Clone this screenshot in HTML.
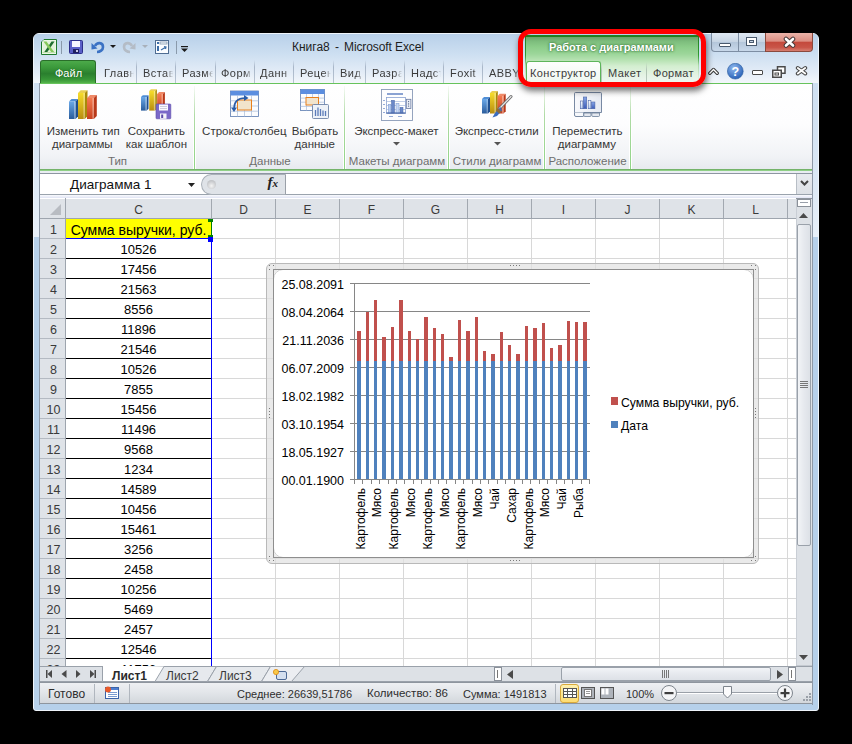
<!DOCTYPE html>
<html><head><meta charset="utf-8">
<style>
*{margin:0;padding:0;box-sizing:border-box}
html,body{width:852px;height:744px;background:#000;overflow:hidden;font-family:"Liberation Sans",sans-serif;font-size:12px;color:#000;position:relative}
div,span,svg{position:absolute}
.t{white-space:nowrap;line-height:1}
.tab{color:#3b3b3b;font-size:11px}
.rb{color:#363636;font-size:11.5px;text-align:center;line-height:13px}
.gl{color:#6e6e6e;font-size:11.5px;text-align:center;line-height:13px}
.num{font-size:12px;color:#000;text-align:center;width:145px;line-height:1}
.rh{font-size:12.5px;color:#3a3a3a;text-align:center;width:27px;line-height:1}
.ch{font-size:12px;color:#3a3a3a;text-align:center;width:64px;line-height:1}
</style></head><body>

<div style="left:33px;top:33px;width:786px;height:678px;border-radius:6px 6px 3px 3px;background:#b6d0ea;border:1px solid #eef4fa"></div>
<div style="left:34px;top:34px;width:784px;height:49px;border-radius:5px 5px 0 0;background:linear-gradient(#b8d0e9,#cddff1 20px,#e3ecf7 38px,#f3f7fb 49px)"></div>
<svg style="left:41px;top:39px" width="16" height="16" viewBox="0 0 16 16">
<path d="M3 0.5 H15.5 V15.5 H0.5 V3 Z" fill="#f4faf0" stroke="#1f7a2e"/>
<rect x="1.5" y="1.5" width="13" height="13" fill="#e2f2da"/>
<path d="M10.5 2.5 L13.5 2.5 L6 13.5 L3 13.5 Z" fill="#1f6e30"/>
<path d="M2.5 2.5 L5.5 2.5 L13.5 13.5 L10.5 13.5 Z" fill="#86c85a"/>
<path d="M1.5 13.5 H14.5" stroke="#bfe0b0" stroke-width="1"/>
</svg>
<div style="left:61px;top:41px;width:1px;height:13px;background:#8a9aab"></div>
<svg style="left:69px;top:40px" width="14" height="14" viewBox="0 0 14 14">
<rect x="0.5" y="0.5" width="13" height="13" rx="1" fill="#5a5fc8" stroke="#2c2f8a"/>
<rect x="3" y="1" width="8" height="6" fill="#f4f4ff"/>
<rect x="4" y="9" width="6" height="4" fill="#1f2060"/>
<rect x="7" y="10" width="2" height="2" fill="#c8c8e8"/>
</svg>
<svg style="left:91px;top:40px" width="14" height="14" viewBox="0 0 14 14">
<path d="M4 6 C6 2,12 2,12 7 C12 10,9 12,6 12" fill="none" stroke="#3b72c4" stroke-width="2.6"/>
<path d="M0.5 3 L6.5 8.5 L0.5 9.5 Z" fill="#3b72c4"/>
</svg>
<svg style="left:110px;top:45px" width="6" height="4" viewBox="0 0 6 4"><path d="M0 0H6L3 3Z" fill="#1a1a1a"/></svg>
<svg style="left:122px;top:40px" width="14" height="14" viewBox="0 0 14 14">
<path d="M10 6 C8 2,2 2,2 7 C2 10,5 12,8 12" fill="none" stroke="#b4bcc6" stroke-width="2.6"/>
<path d="M13.5 3 L7.5 8.5 L13.5 9.5 Z" fill="#b4bcc6"/>
</svg>
<svg style="left:142px;top:45px" width="6" height="4" viewBox="0 0 6 4"><path d="M0 0H6L3 3Z" fill="#a8b0ba"/></svg>
<svg style="left:155px;top:40px" width="14" height="14" viewBox="0 0 14 14">
<rect x="0.5" y="0.5" width="13" height="13" fill="#fbfdff" stroke="#4f6d92"/>
<rect x="2" y="2" width="2" height="2" fill="#3d6ea8"/><rect x="5" y="2" width="7" height="2" fill="none" stroke="#7d93ad" stroke-width="0.8"/>
<rect x="2" y="6" width="2" height="5" fill="#3d6ea8"/>
<path d="M6 10 L11 7 M9 6.5 L11 7 L10.5 9" stroke="#3d6ea8" stroke-width="1.2" fill="none"/>
</svg>
<div style="left:176px;top:41px;width:1px;height:13px;background:#8a9aab"></div>
<svg style="left:181px;top:46px" width="7" height="6" viewBox="0 0 7 6"><rect x="0" y="0" width="7" height="1.2" fill="#1a1a1a"/><path d="M0 2.5H7L3.5 6Z" fill="#1a1a1a"/></svg>
<div class="t" style="left:292px;top:41px;color:#1e1e1e;font-size:12px">Книга8</div>
<div class="t" style="left:335px;top:41px;color:#1e1e1e;font-size:12px">-</div>
<div class="t" style="left:344px;top:41px;color:#1e1e1e;font-size:12px;letter-spacing:-0.1px">Microsoft Excel</div>
<div style="left:711px;top:33px;width:28px;height:19px;border:1px solid #7d8ea3;border-top:none;border-radius:0 0 0 4px;background:linear-gradient(#dfe8f2,#c6d4e3 50%,#b4c6da 51%,#c8d8ea)"></div>
<div style="left:738px;top:33px;width:28px;height:19px;border:1px solid #7d8ea3;border-top:none;background:linear-gradient(#dfe8f2,#c6d4e3 50%,#b4c6da 51%,#c8d8ea)"></div>
<div style="left:765px;top:33px;width:48px;height:19px;border:1px solid #8a4a3e;border-top:none;border-radius:0 0 4px 0;background:linear-gradient(#ebb3a9,#dc8f83 45%,#c4493c 52%,#c95548 80%,#d67e70)"></div>
<div style="left:719px;top:43px;width:12px;height:4px;background:#fff;border:1px solid #4a5a6e;border-radius:1px"></div>
<div style="left:746px;top:37px;width:11px;height:9px;background:transparent;border:1px solid #4a5a6e;box-shadow:inset 0 0 0 2px #fff, inset 0 0 0 3px #4a5a6e"></div>
<svg style="left:783px;top:36px" width="13" height="12" viewBox="0 0 13 12"><path d="M3 3 L10 9.5 M10 3 L3 9.5" stroke="#4a3a3a" stroke-width="4.6" stroke-linecap="round"/><path d="M3 3 L10 9.5 M10 3 L3 9.5" stroke="#fff" stroke-width="2.6" stroke-linecap="round"/></svg>
<div style="left:40px;top:60px;width:56px;height:24px;border-radius:3px 3px 0 0;background:linear-gradient(#4caa4a,#3a983a 30%,#2a7f2e 55%,#379637 80%,#5cbc50);border:1px solid #2a6e2a;border-bottom:none"></div>
<div class="t" style="left:55px;top:67.5px;color:#fff;font-size:11px;text-shadow:0 0 2px rgba(20,80,20,0.6)">Файл</div>
<div style="left:136px;top:60px;width:1px;height:23px;background:linear-gradient(rgba(160,175,195,0),#a8b6c8 30%,#b8c4d2)"></div>
<div style="left:175px;top:60px;width:1px;height:23px;background:linear-gradient(rgba(160,175,195,0),#a8b6c8 30%,#b8c4d2)"></div>
<div style="left:215px;top:60px;width:1px;height:23px;background:linear-gradient(rgba(160,175,195,0),#a8b6c8 30%,#b8c4d2)"></div>
<div style="left:254px;top:60px;width:1px;height:23px;background:linear-gradient(rgba(160,175,195,0),#a8b6c8 30%,#b8c4d2)"></div>
<div style="left:293px;top:60px;width:1px;height:23px;background:linear-gradient(rgba(160,175,195,0),#a8b6c8 30%,#b8c4d2)"></div>
<div style="left:333px;top:60px;width:1px;height:23px;background:linear-gradient(rgba(160,175,195,0),#a8b6c8 30%,#b8c4d2)"></div>
<div style="left:365px;top:60px;width:1px;height:23px;background:linear-gradient(rgba(160,175,195,0),#a8b6c8 30%,#b8c4d2)"></div>
<div style="left:404px;top:60px;width:1px;height:23px;background:linear-gradient(rgba(160,175,195,0),#a8b6c8 30%,#b8c4d2)"></div>
<div style="left:443px;top:60px;width:1px;height:23px;background:linear-gradient(rgba(160,175,195,0),#a8b6c8 30%,#b8c4d2)"></div>
<div style="left:482px;top:60px;width:1px;height:23px;background:linear-gradient(rgba(160,175,195,0),#a8b6c8 30%,#b8c4d2)"></div>
<div class="t tab" style="left:104px;top:67.5px;width:30px;overflow:hidden;letter-spacing:0.45px;-webkit-mask-image:linear-gradient(90deg,#000 23px,rgba(0,0,0,0.05) 30px)">Главн</div>
<div class="t tab" style="left:143px;top:67.5px;width:30px;overflow:hidden;letter-spacing:0.45px;-webkit-mask-image:linear-gradient(90deg,#000 23px,rgba(0,0,0,0.05) 30px)">Встав</div>
<div class="t tab" style="left:182px;top:67.5px;width:31px;overflow:hidden;letter-spacing:0.45px;-webkit-mask-image:linear-gradient(90deg,#000 24px,rgba(0,0,0,0.05) 31px)">Разме</div>
<div class="t tab" style="left:221px;top:67.5px;width:31px;overflow:hidden;letter-spacing:0.45px;-webkit-mask-image:linear-gradient(90deg,#000 24px,rgba(0,0,0,0.05) 31px)">Форм</div>
<div class="t tab" style="left:260px;top:67.5px;width:31px;overflow:hidden;letter-spacing:0.45px;-webkit-mask-image:linear-gradient(90deg,#000 24px,rgba(0,0,0,0.05) 31px)">Данн</div>
<div class="t tab" style="left:300px;top:67.5px;width:31px;overflow:hidden;letter-spacing:0.45px;-webkit-mask-image:linear-gradient(90deg,#000 24px,rgba(0,0,0,0.05) 31px)">Рецен</div>
<div class="t tab" style="left:340px;top:67.5px;width:23px;overflow:hidden;letter-spacing:0.45px;-webkit-mask-image:linear-gradient(90deg,#000 16px,rgba(0,0,0,0.05) 23px)">Вид</div>
<div class="t tab" style="left:372px;top:67.5px;width:30px;overflow:hidden;letter-spacing:0.45px;-webkit-mask-image:linear-gradient(90deg,#000 23px,rgba(0,0,0,0.05) 30px)">Разра</div>
<div class="t tab" style="left:411px;top:67.5px;width:30px;overflow:hidden;letter-spacing:0.45px;-webkit-mask-image:linear-gradient(90deg,#000 23px,rgba(0,0,0,0.05) 30px)">Надст</div>
<div class="t tab" style="left:450px;top:67.5px;width:30px;overflow:hidden;letter-spacing:0.45px;-webkit-mask-image:linear-gradient(90deg,#000 23px,rgba(0,0,0,0.05) 30px)">Foxit</div>
<div class="t tab" style="left:489px;top:67.5px;width:32px;overflow:hidden;letter-spacing:0.45px;-webkit-mask-image:linear-gradient(90deg,#000 25px,rgba(0,0,0,0.05) 32px)">ABBYY</div>
<div style="left:525px;top:35px;width:174px;height:48px;background:linear-gradient(#5f965f,#7cbc7c 6px,#8ccd8a 12px,#9cd69a 19px,#b6e2b2 25px,#d3eed0 31px,#e4f3e4 40px,#eef6f2 48px)"></div>
<div style="left:525px;top:35px;width:174px;height:2px;background:#1f7f1f"></div>
<div style="left:525px;top:35px;width:1px;height:48px;background:linear-gradient(#1f7f1f,#2f9a2f 20px,rgba(80,170,80,0.3) 30px,rgba(80,170,80,0))"></div>
<div style="left:698px;top:35px;width:1px;height:48px;background:linear-gradient(#1f7f1f,#2f9a2f 20px,rgba(80,170,80,0.3) 30px,rgba(80,170,80,0))"></div>
<div class="t" style="left:549px;top:42px;color:#fff;font-weight:bold;font-size:11px;text-shadow:0 0 3px #3f7f3f,0 0 2px #3f7f3f">Работа с диаграммами</div>
<div style="left:526px;top:61px;width:75px;height:23px;border:1px solid #5db55a;border-bottom:none;border-radius:3px 3px 0 0;background:linear-gradient(#fdfefd,#eef7ee)"></div>
<div class="t" style="left:530px;top:67.5px;color:#3b3b3b;font-size:11px;letter-spacing:0.35px">Конструктор</div>
<div style="left:601px;top:62px;width:1px;height:21px;background:linear-gradient(rgba(170,200,170,0),#b0c4b4 40%,#b8c8bc)"></div>
<div style="left:646px;top:62px;width:1px;height:21px;background:linear-gradient(rgba(170,200,170,0),#b0c4b4 40%,#b8c8bc)"></div>
<div class="t" style="left:608px;top:67.5px;color:#3b3b3b;font-size:11px;letter-spacing:0.45px">Макет</div>
<div class="t" style="left:653px;top:67.5px;color:#3b3b3b;font-size:11px;letter-spacing:0.3px">Формат</div>
<svg style="left:708px;top:67px" width="11" height="8" viewBox="0 0 11 8"><path d="M1.8 6.2 L5.5 2.5 L9.2 6.2" fill="none" stroke="#3a3a3a" stroke-width="3.4" stroke-linejoin="round" stroke-linecap="round"/><path d="M1.8 6.2 L5.5 2.5 L9.2 6.2" fill="none" stroke="#fff" stroke-width="1.3" stroke-linecap="round"/></svg>
<svg style="left:727px;top:63px" width="17" height="17" viewBox="0 0 17 17"><defs><radialGradient id="hg" cx="40%" cy="30%" r="70%"><stop offset="0" stop-color="#8fb8ee"/><stop offset="1" stop-color="#2a63b8"/></radialGradient></defs><circle cx="8.3" cy="8.2" r="7.9" fill="url(#hg)" stroke="#2f5f9f" stroke-width="0.6"/><text x="8.3" y="13.2" font-family="Liberation Sans" font-weight="bold" font-size="12.5" fill="#fff" text-anchor="middle">?</text></svg>
<div style="left:752px;top:70px;width:11px;height:5px;background:#fff;border:1.5px solid #4a4a4a;border-radius:1px"></div>
<svg style="left:772px;top:66px" width="14" height="12" viewBox="0 0 14 12"><rect x="5.5" y="0.75" width="7.5" height="6.5" fill="#fff" stroke="#4a4a4a" stroke-width="1.5"/><rect x="0.75" y="4.25" width="8.5" height="7" fill="#fff" stroke="#4a4a4a" stroke-width="1.5"/><rect x="3" y="7" width="3.5" height="2" fill="#fff" stroke="#4a4a4a" stroke-width="1"/></svg>
<svg style="left:795px;top:65px" width="13" height="11" viewBox="0 0 13 11"><path d="M2.8 3 L10.2 8.5 M10.2 3 L2.8 8.5" stroke="#4a4a4a" stroke-width="4" stroke-linecap="round"/><path d="M2.8 3 L10.2 8.5 M10.2 3 L2.8 8.5" stroke="#fff" stroke-width="1.8" stroke-linecap="round"/></svg>
<div style="left:40px;top:83px;width:772px;height:88px;background:linear-gradient(#ffffff,#fdfdfe 40px,#f1f3f6 72px,#e6e9ee 86px);border-top:1px solid #67c35c"></div>
<div style="left:40px;top:169px;width:772px;height:1px;background:#74b36a"></div>
<div style="left:40px;top:170px;width:772px;height:1px;background:#8fcf86"></div>
<div style="left:40px;top:171px;width:772px;height:1px;background:#c9e5c4"></div>
<div style="left:193px;top:86px;width:3px;height:83px;background:linear-gradient(rgba(255,255,255,0),#fff 35%,#fff)"></div>
<div style="left:194px;top:86px;width:1px;height:83px;background:linear-gradient(rgba(180,220,170,0.1),#b0dba6 35%,#8fd486)"></div>
<div style="left:343px;top:86px;width:3px;height:83px;background:linear-gradient(rgba(255,255,255,0),#fff 35%,#fff)"></div>
<div style="left:344px;top:86px;width:1px;height:83px;background:linear-gradient(rgba(180,220,170,0.1),#b0dba6 35%,#8fd486)"></div>
<div style="left:447px;top:86px;width:3px;height:83px;background:linear-gradient(rgba(255,255,255,0),#fff 35%,#fff)"></div>
<div style="left:448px;top:86px;width:1px;height:83px;background:linear-gradient(rgba(180,220,170,0.1),#b0dba6 35%,#8fd486)"></div>
<div style="left:543px;top:86px;width:3px;height:83px;background:linear-gradient(rgba(255,255,255,0),#fff 35%,#fff)"></div>
<div style="left:544px;top:86px;width:1px;height:83px;background:linear-gradient(rgba(180,220,170,0.1),#b0dba6 35%,#8fd486)"></div>
<div style="left:629px;top:86px;width:3px;height:83px;background:linear-gradient(rgba(255,255,255,0),#fff 35%,#fff)"></div>
<div style="left:630px;top:86px;width:1px;height:83px;background:linear-gradient(rgba(180,220,170,0.1),#b0dba6 35%,#8fd486)"></div>
<svg style="left:60px;top:85px" width="45" height="36" viewBox="60 85 45 36"><defs>
<linearGradient id="gb" x1="0" y1="0" x2="0" y2="1"><stop offset="0" stop-color="#6aa8e8"/><stop offset="1" stop-color="#2a5c9c"/></linearGradient>
<linearGradient id="gy" x1="0" y1="0" x2="0" y2="1"><stop offset="0" stop-color="#f6dc2a"/><stop offset="1" stop-color="#b88c10"/></linearGradient>
<linearGradient id="gr" x1="0" y1="0" x2="0" y2="1"><stop offset="0" stop-color="#f47a50"/><stop offset="1" stop-color="#c8401c"/></linearGradient>
</defs>
<path d="M69 101.5 L71.5 99.0 L78.0 99.0 L75.5 101.5Z" fill="#4f8ed6"/><path d="M75.5 101.5 L78.0 99.0 L78.0 116.5 L75.5 119.0Z" fill="#1f4f90"/><rect x="69" y="101.5" width="6.5" height="17.5" fill="url(#gb)"/><rect x="74.2" y="101.5" width="1" height="17.5" fill="#fff" fill-opacity="0.45"/>
<path d="M78 93 L80.7 90.3 L87.5 90.3 L84.8 93Z" fill="#ead050"/><path d="M84.8 93 L87.5 90.3 L87.5 116.3 L84.8 119Z" fill="#a88a08"/><rect x="78" y="93" width="6.8" height="26" fill="url(#gy)"/><rect x="83.5" y="93" width="1" height="26" fill="#fff" fill-opacity="0.45"/>
<path d="M87 98 L90 95 L96.8 95 L93.8 98Z" fill="#f08a68"/><path d="M93.8 98 L96.8 95 L96.8 116 L93.8 119Z" fill="#b83818"/><rect x="87" y="98" width="6.8" height="21" fill="url(#gr)"/><rect x="92.5" y="98" width="1" height="21" fill="#fff" fill-opacity="0.45"/>
</svg>
<svg style="left:136px;top:85px" width="40" height="37" viewBox="136 85 40 37">
<path d="M141 97 L142.8 95.2 L148.5 95.2 L146.7 97Z" fill="#4f8ed6"/><path d="M146.7 97 L148.5 95.2 L148.5 108.8 L146.7 110.6Z" fill="#1f4f90"/><rect x="141" y="97" width="5.7" height="13.6" fill="url(#gb)"/><rect x="145.39999999999998" y="97" width="1" height="13.6" fill="#fff" fill-opacity="0.45"/>
<path d="M149.2 91 L150.89999999999998 89.3 L156.89999999999998 89.3 L155.2 91Z" fill="#ead050"/><path d="M155.2 91 L156.89999999999998 89.3 L156.89999999999998 108.89999999999999 L155.2 110.6Z" fill="#a88a08"/><rect x="149.2" y="91" width="6" height="19.6" fill="url(#gy)"/><rect x="153.89999999999998" y="91" width="1" height="19.6" fill="#fff" fill-opacity="0.45"/>
<path d="M157.1 94 L159.1 92 L164.9 92 L162.9 94Z" fill="#f08a68"/><path d="M162.9 94 L164.9 92 L164.9 108.6 L162.9 110.6Z" fill="#b83818"/><rect x="157.1" y="94" width="5.8" height="16.6" fill="url(#gr)"/><rect x="161.6" y="94" width="1" height="16.6" fill="#fff" fill-opacity="0.45"/>
<rect x="156" y="104" width="14.8" height="14.8" rx="0.8" fill="#7a68c8" stroke="#5a4aa8" stroke-width="0.6"/>
<rect x="159" y="104.5" width="9" height="6" fill="#fbfbff"/>
<path d="M160 106.5H167M160 108.5H167" stroke="#b0b0c8" stroke-width="0.6"/>
<rect x="160" y="113.5" width="6.5" height="5.3" fill="#f4f4f8"/>
<rect x="161.2" y="114.5" width="2" height="3.5" fill="#5a4aa8"/>
</svg>
<svg style="left:225px;top:85px" width="110" height="37" viewBox="225 85 110 37">
<rect x="230.5" y="91" width="28" height="25.5" fill="#fbfcfe" stroke="#5a7ab0" stroke-width="0.8"/><rect x="230.5" y="91" width="28" height="4.5" fill="#5b8ee0"/><line x1="237.5" y1="95.5" x2="237.5" y2="116.5" stroke="#a8bcd8" stroke-width="0.7"/><line x1="244.5" y1="95.5" x2="244.5" y2="116.5" stroke="#a8bcd8" stroke-width="0.7"/><line x1="251.5" y1="95.5" x2="251.5" y2="116.5" stroke="#a8bcd8" stroke-width="0.7"/><line x1="230.5" y1="100.8" x2="258.5" y2="100.8" stroke="#a8bcd8" stroke-width="0.7"/><line x1="230.5" y1="106.0" x2="258.5" y2="106.0" stroke="#a8bcd8" stroke-width="0.7"/><line x1="230.5" y1="111.2" x2="258.5" y2="111.2" stroke="#a8bcd8" stroke-width="0.7"/>
<rect x="237.5" y="100" width="14" height="10" fill="#f2e4cc" stroke="#e8801c" stroke-width="1"/>
<path d="M234 109 C234 101,238 98,245 98" fill="none" stroke="#2a5ca8" stroke-width="1.6"/>
<path d="M244 95 L248.5 98 L244 101Z" fill="#2a5ca8"/>
<path d="M231 107.5 L234 112 L237 107.5Z" fill="#2a5ca8"/>
<rect x="300.5" y="89.5" width="24" height="21" fill="#fbfcfe" stroke="#5a7ab0" stroke-width="0.8"/><rect x="300.5" y="89.5" width="24" height="4.5" fill="#5b8ee0"/><line x1="306.5" y1="94.0" x2="306.5" y2="110.5" stroke="#a8bcd8" stroke-width="0.7"/><line x1="312.5" y1="94.0" x2="312.5" y2="110.5" stroke="#a8bcd8" stroke-width="0.7"/><line x1="318.5" y1="94.0" x2="318.5" y2="110.5" stroke="#a8bcd8" stroke-width="0.7"/><line x1="300.5" y1="98.1" x2="324.5" y2="98.1" stroke="#a8bcd8" stroke-width="0.7"/><line x1="300.5" y1="102.2" x2="324.5" y2="102.2" stroke="#a8bcd8" stroke-width="0.7"/><line x1="300.5" y1="106.4" x2="324.5" y2="106.4" stroke="#a8bcd8" stroke-width="0.7"/>
<rect x="306" y="97.5" width="12.5" height="7.5" fill="#f2e4cc" stroke="#e8801c" stroke-width="1"/>
<rect x="312.5" y="104.5" width="16" height="14" rx="1" fill="#eef2f8" stroke="#6f85a8" stroke-width="0.9"/>
<path d="M315.5 116V110M318 116V107.5M320.5 116V109M323 116V110.5M325.5 116V111" stroke="#5a7ab8" stroke-width="1.3"/>
</svg>
<svg style="left:375px;top:85px" width="45" height="40" viewBox="375 85 45 40">
<rect x="381.5" y="89.5" width="31" height="31" fill="#fdfdfe" stroke="#8a9bb8" stroke-width="0.9"/>
<rect x="387" y="93" width="16" height="2" fill="#8aa2d2"/>
<rect x="386.5" y="97.5" width="19" height="15.5" fill="#fff" stroke="#8aa2d2" stroke-width="0.8"/>
<path d="M386.5 101.5H405.5M386.5 105.5H405.5M386.5 109.5H405.5" stroke="#9ab0d8" stroke-width="0.6"/>
<rect x="388.3" y="104.3" width="2.6" height="8.7" fill="#b8ccf0" stroke="#7a98d0" stroke-width="0.5"/>
<rect x="391.5" y="100.3" width="3" height="12.7" fill="#6a88c8" stroke="#4a68a8" stroke-width="0.5"/>
<rect x="396" y="103.3" width="3" height="9.7" fill="#c8d8f4" stroke="#7a98d0" stroke-width="0.5"/>
<rect x="400" y="107.3" width="3" height="5.7" fill="#6a88c8" stroke="#4a68a8" stroke-width="0.5"/>
<rect x="386.3" y="112.5" width="19.4" height="1.2" fill="#4a68a8"/>
<rect x="406.3" y="99.3" width="4.6" height="9.2" fill="#e8ecf4" stroke="#6a7aa0" stroke-width="0.8"/>
<path d="M408.6 101.5v.1M408.6 103.8v.1M408.6 106v.1" stroke="#4a5a80" stroke-width="1.2" stroke-linecap="round"/>
<path d="M383 100.5H385M383 104.5H385M383 108.5H385M383 112.5H385M389 116.5H393M398 116.5H402" stroke="#8aa2d2" stroke-width="0.9"/>
</svg>
<svg style="left:475px;top:85px" width="45" height="37" viewBox="475 85 45 37">
<path d="M482 99 L484 97 L490 97 L488 99Z" fill="#4f8ed6"/><path d="M488 99 L490 97 L490 111.5 L488 113.5Z" fill="#1f4f90"/><rect x="482" y="99" width="6" height="14.5" fill="url(#gb)"/><rect x="486.7" y="99" width="1" height="14.5" fill="#fff" fill-opacity="0.45"/>
<path d="M490 93 L492 91 L497.8 91 L495.8 93Z" fill="#ead050"/><path d="M495.8 93 L497.8 91 L497.8 111.5 L495.8 113.5Z" fill="#a88a08"/><rect x="490" y="93" width="5.8" height="20.5" fill="url(#gy)"/><rect x="494.5" y="93" width="1" height="20.5" fill="#fff" fill-opacity="0.45"/>
<path d="M497.5 96 L499.7 93.8 L505.7 93.8 L503.5 96Z" fill="#f08a68"/><path d="M503.5 96 L505.7 93.8 L505.7 111.3 L503.5 113.5Z" fill="#b83818"/><rect x="497.5" y="96" width="6" height="17.5" fill="url(#gr)"/><rect x="502.2" y="96" width="1" height="17.5" fill="#fff" fill-opacity="0.45"/>
<path d="M511 96.5 L499 109" stroke="#6c6c6c" stroke-width="3" stroke-linecap="round"/>
<path d="M511 96.5 L499 109" stroke="#e8e8e8" stroke-width="1.2" stroke-linecap="round"/>
<path d="M500.5 107 L502 110.5 L497 116 L492.5 117.5 L495 113 Z" fill="#3a6cc0"/>
<path d="M498 108 L501.5 111.5 L499 113.5 L496 110.5Z" fill="#8a6a40"/>
</svg>
<svg style="left:570px;top:88px" width="36" height="32" viewBox="570 88 36 32">
<defs><linearGradient id="mvb" x1="0" y1="0" x2="1" y2="0"><stop offset="0" stop-color="#f8f9fc"/><stop offset="1" stop-color="#e6eaf2"/></linearGradient>
<linearGradient id="bl1" x1="0" y1="0" x2="0" y2="1"><stop offset="0" stop-color="#ffffff"/><stop offset="1" stop-color="#b8cdf0"/></linearGradient>
<linearGradient id="bd1" x1="0" y1="0" x2="0" y2="1"><stop offset="0" stop-color="#8aa8e8"/><stop offset="1" stop-color="#3a5ab8"/></linearGradient></defs>
<path d="M574.5 93.5 Q574.5 92.5 575.5 92.5 H600.5 Q601.5 92.5 601.5 93.5 V112.5 H574.5Z" fill="url(#mvb)" stroke="#6a7d98" stroke-width="0.9"/>
<path d="M574.5 112.5 V115 Q574.5 116.5 576 116.5 H583 Q583.8 116.5 583.8 115 V112.5" fill="#f6f8fb" stroke="#6a7d98" stroke-width="0.9"/>
<path d="M583.8 113 H591 V115.5 Q591 116.5 590 116.5 H584.8 Q583.8 116.5 583.8 115.5Z" fill="#e4e8ef" stroke="#6a7d98" stroke-width="0.8"/>
<path d="M591.8 113 H599.5 V115.5 Q599.5 116.5 598.5 116.5 H592.8 Q591.8 116.5 591.8 115.5Z" fill="#e4e8ef" stroke="#6a7d98" stroke-width="0.8"/>
<rect x="580.3" y="101" width="2.6" height="7.7" fill="url(#bl1)" stroke="#4a64a8" stroke-width="0.6"/>
<rect x="583.4" y="97" width="3.3" height="11.7" fill="url(#bd1)" stroke="#4a64a8" stroke-width="0.6"/>
<rect x="588.2" y="100.3" width="2.7" height="8.4" fill="url(#bl1)" stroke="#4a64a8" stroke-width="0.6"/>
<rect x="591.5" y="102" width="3.4" height="6.7" fill="url(#bd1)" stroke="#4a64a8" stroke-width="0.6"/>
</svg>
<div class="t rb" style="left:23.200000000000003px;top:125px;width:120px">Изменить тип</div>
<div class="t rb" style="left:22.299999999999997px;top:138px;width:120px">диаграммы</div>
<div class="t rb" style="left:96.4px;top:125px;width:120px">Сохранить</div>
<div class="t rb" style="left:96.4px;top:138px;width:120px">как шаблон</div>
<div class="t rb" style="left:184.3px;top:125px;width:120px">Строка/столбец</div>
<div class="t rb" style="left:255px;top:125px;width:120px">Выбрать</div>
<div class="t rb" style="left:254.8px;top:138px;width:120px">данные</div>
<div class="t rb" style="left:336.3px;top:125px;width:120px">Экспресс-макет</div>
<div class="t rb" style="left:436.7px;top:125px;width:120px">Экспресс-стили</div>
<div class="t rb" style="left:527.4px;top:125px;width:120px">Переместить</div>
<div class="t rb" style="left:526.9px;top:138px;width:120px">диаграмму</div>
<svg style="left:393px;top:142px" width="7" height="4" viewBox="0 0 7 4"><path d="M0 0H7L3.5 3.5Z" fill="#555"/></svg>
<svg style="left:494px;top:142px" width="7" height="4" viewBox="0 0 7 4"><path d="M0 0H7L3.5 3.5Z" fill="#555"/></svg>
<div class="t gl" style="left:57.5px;top:155px;width:120px">Тип</div>
<div class="t gl" style="left:210px;top:155px;width:120px">Данные</div>
<div class="t gl" style="left:337px;top:155px;width:120px">Макеты диаграмм</div>
<div class="t gl" style="left:437px;top:155px;width:120px">Стили диаграмм</div>
<div class="t gl" style="left:527.5px;top:155px;width:120px">Расположение</div>
<div style="left:40px;top:171px;width:772px;height:27px;background:#e9edf2"></div>
<div style="left:40px;top:173px;width:772px;height:1px;background:#8d96a1"></div>
<div style="left:40px;top:174px;width:756px;height:20px;background:#fff"></div>
<div style="left:40px;top:194px;width:772px;height:1px;background:#9aa3ad"></div>
<div style="left:40px;top:195px;width:772px;height:3px;background:linear-gradient(#fafbfe,#dfe3f3)"></div>
<div style="left:40px;top:198px;width:772px;height:1px;background:#8e959e"></div>
<div class="t" style="left:70px;top:178px;font-size:13.5px;color:#111">Диаграмма 1</div>
<svg style="left:188px;top:183px" width="7" height="4" viewBox="0 0 7 4"><path d="M0 0H7L3.5 4Z" fill="#222"/></svg>
<div style="left:201px;top:174px;width:85px;height:21px;background:#dfe3e8;border:1px solid #a9b0b8;border-right:1px solid #9aa0a8;border-radius:11px 0 0 11px"></div>
<div style="left:206.5px;top:179.5px;width:9px;height:9px;border-radius:50%;background:radial-gradient(circle at 50% 65%,#f4f4f4,#c9cbce 60%,#b4b7bb)"></div>
<div class="t" style="left:267.5px;top:175px;font-family:'Liberation Serif',serif;font-size:15px;color:#222"><i><b>f</b></i><i><b style='font-size:11px'>x</b></i></div>
<div style="left:796px;top:174px;width:16px;height:20px;background:linear-gradient(#e8ebef,#dde1e6);border-left:1px solid #b8bec6"></div>
<svg style="left:800px;top:180px" width="9" height="6" viewBox="0 0 9 6"><path d="M1 1 L4.5 4.5 L8 1" fill="none" stroke="#444" stroke-width="2"/></svg>
<div style="left:40px;top:198px;width:756px;height:468px;background:#fff"></div>
<div style="left:40px;top:199px;width:756px;height:20px;background:#dfe3e8"></div>
<div style="left:40px;top:218px;width:756px;height:1px;background:#9ea5ae"></div>
<div style="left:40px;top:219px;width:26px;height:447px;background:#dfe3e8"></div>
<div style="left:65px;top:198px;width:1px;height:468px;background:#9ea5ae"></div>
<svg style="left:50px;top:204px" width="11" height="11" viewBox="0 0 11 11"><path d="M11 0 V11 H0 Z" fill="#b8bcc2"/></svg>
<div style="left:211px;top:199px;width:1px;height:19px;background:#a2a8b0"></div>
<div class="t ch" style="left:66px;top:204px;width:145px">C</div>
<div style="left:275px;top:199px;width:1px;height:19px;background:#a2a8b0"></div>
<div class="t ch" style="left:212px;top:204px;width:63px">D</div>
<div style="left:339px;top:199px;width:1px;height:19px;background:#a2a8b0"></div>
<div class="t ch" style="left:276px;top:204px;width:63px">E</div>
<div style="left:403px;top:199px;width:1px;height:19px;background:#a2a8b0"></div>
<div class="t ch" style="left:340px;top:204px;width:63px">F</div>
<div style="left:467px;top:199px;width:1px;height:19px;background:#a2a8b0"></div>
<div class="t ch" style="left:404px;top:204px;width:63px">G</div>
<div style="left:531px;top:199px;width:1px;height:19px;background:#a2a8b0"></div>
<div class="t ch" style="left:468px;top:204px;width:63px">H</div>
<div style="left:595px;top:199px;width:1px;height:19px;background:#a2a8b0"></div>
<div class="t ch" style="left:532px;top:204px;width:63px">I</div>
<div style="left:659px;top:199px;width:1px;height:19px;background:#a2a8b0"></div>
<div class="t ch" style="left:596px;top:204px;width:63px">J</div>
<div style="left:723px;top:199px;width:1px;height:19px;background:#a2a8b0"></div>
<div class="t ch" style="left:660px;top:204px;width:63px">K</div>
<div style="left:787px;top:199px;width:1px;height:19px;background:#a2a8b0"></div>
<div class="t ch" style="left:724px;top:204px;width:63px">L</div>
<div style="left:211px;top:219px;width:1px;height:447px;background:#d8d8d8"></div>
<div style="left:275px;top:219px;width:1px;height:447px;background:#d8d8d8"></div>
<div style="left:339px;top:219px;width:1px;height:447px;background:#d8d8d8"></div>
<div style="left:403px;top:219px;width:1px;height:447px;background:#d8d8d8"></div>
<div style="left:467px;top:219px;width:1px;height:447px;background:#d8d8d8"></div>
<div style="left:531px;top:219px;width:1px;height:447px;background:#d8d8d8"></div>
<div style="left:595px;top:219px;width:1px;height:447px;background:#d8d8d8"></div>
<div style="left:659px;top:219px;width:1px;height:447px;background:#d8d8d8"></div>
<div style="left:723px;top:219px;width:1px;height:447px;background:#d8d8d8"></div>
<div style="left:787px;top:219px;width:1px;height:447px;background:#d8d8d8"></div>
<div style="left:66px;top:238px;width:730px;height:1px;background:#d8d8d8"></div>
<div style="left:40px;top:238px;width:25px;height:1px;background:#b4bac2"></div>
<div class="t rh" style="left:40px;top:224px">1</div>
<div style="left:66px;top:258px;width:730px;height:1px;background:#d8d8d8"></div>
<div style="left:40px;top:258px;width:25px;height:1px;background:#b4bac2"></div>
<div class="t rh" style="left:40px;top:244px">2</div>
<div style="left:66px;top:278px;width:730px;height:1px;background:#d8d8d8"></div>
<div style="left:40px;top:278px;width:25px;height:1px;background:#b4bac2"></div>
<div class="t rh" style="left:40px;top:264px">3</div>
<div style="left:66px;top:298px;width:730px;height:1px;background:#d8d8d8"></div>
<div style="left:40px;top:298px;width:25px;height:1px;background:#b4bac2"></div>
<div class="t rh" style="left:40px;top:284px">4</div>
<div style="left:66px;top:318px;width:730px;height:1px;background:#d8d8d8"></div>
<div style="left:40px;top:318px;width:25px;height:1px;background:#b4bac2"></div>
<div class="t rh" style="left:40px;top:304px">5</div>
<div style="left:66px;top:338px;width:730px;height:1px;background:#d8d8d8"></div>
<div style="left:40px;top:338px;width:25px;height:1px;background:#b4bac2"></div>
<div class="t rh" style="left:40px;top:324px">6</div>
<div style="left:66px;top:358px;width:730px;height:1px;background:#d8d8d8"></div>
<div style="left:40px;top:358px;width:25px;height:1px;background:#b4bac2"></div>
<div class="t rh" style="left:40px;top:344px">7</div>
<div style="left:66px;top:378px;width:730px;height:1px;background:#d8d8d8"></div>
<div style="left:40px;top:378px;width:25px;height:1px;background:#b4bac2"></div>
<div class="t rh" style="left:40px;top:364px">8</div>
<div style="left:66px;top:398px;width:730px;height:1px;background:#d8d8d8"></div>
<div style="left:40px;top:398px;width:25px;height:1px;background:#b4bac2"></div>
<div class="t rh" style="left:40px;top:384px">9</div>
<div style="left:66px;top:418px;width:730px;height:1px;background:#d8d8d8"></div>
<div style="left:40px;top:418px;width:25px;height:1px;background:#b4bac2"></div>
<div class="t rh" style="left:40px;top:404px">10</div>
<div style="left:66px;top:438px;width:730px;height:1px;background:#d8d8d8"></div>
<div style="left:40px;top:438px;width:25px;height:1px;background:#b4bac2"></div>
<div class="t rh" style="left:40px;top:424px">11</div>
<div style="left:66px;top:458px;width:730px;height:1px;background:#d8d8d8"></div>
<div style="left:40px;top:458px;width:25px;height:1px;background:#b4bac2"></div>
<div class="t rh" style="left:40px;top:444px">12</div>
<div style="left:66px;top:478px;width:730px;height:1px;background:#d8d8d8"></div>
<div style="left:40px;top:478px;width:25px;height:1px;background:#b4bac2"></div>
<div class="t rh" style="left:40px;top:464px">13</div>
<div style="left:66px;top:498px;width:730px;height:1px;background:#d8d8d8"></div>
<div style="left:40px;top:498px;width:25px;height:1px;background:#b4bac2"></div>
<div class="t rh" style="left:40px;top:484px">14</div>
<div style="left:66px;top:518px;width:730px;height:1px;background:#d8d8d8"></div>
<div style="left:40px;top:518px;width:25px;height:1px;background:#b4bac2"></div>
<div class="t rh" style="left:40px;top:504px">15</div>
<div style="left:66px;top:538px;width:730px;height:1px;background:#d8d8d8"></div>
<div style="left:40px;top:538px;width:25px;height:1px;background:#b4bac2"></div>
<div class="t rh" style="left:40px;top:524px">16</div>
<div style="left:66px;top:558px;width:730px;height:1px;background:#d8d8d8"></div>
<div style="left:40px;top:558px;width:25px;height:1px;background:#b4bac2"></div>
<div class="t rh" style="left:40px;top:544px">17</div>
<div style="left:66px;top:578px;width:730px;height:1px;background:#d8d8d8"></div>
<div style="left:40px;top:578px;width:25px;height:1px;background:#b4bac2"></div>
<div class="t rh" style="left:40px;top:564px">18</div>
<div style="left:66px;top:598px;width:730px;height:1px;background:#d8d8d8"></div>
<div style="left:40px;top:598px;width:25px;height:1px;background:#b4bac2"></div>
<div class="t rh" style="left:40px;top:584px">19</div>
<div style="left:66px;top:618px;width:730px;height:1px;background:#d8d8d8"></div>
<div style="left:40px;top:618px;width:25px;height:1px;background:#b4bac2"></div>
<div class="t rh" style="left:40px;top:604px">20</div>
<div style="left:66px;top:638px;width:730px;height:1px;background:#d8d8d8"></div>
<div style="left:40px;top:638px;width:25px;height:1px;background:#b4bac2"></div>
<div class="t rh" style="left:40px;top:624px">21</div>
<div style="left:66px;top:658px;width:730px;height:1px;background:#d8d8d8"></div>
<div style="left:40px;top:658px;width:25px;height:1px;background:#b4bac2"></div>
<div class="t rh" style="left:40px;top:644px">22</div>
<div class="t rh" style="left:40px;top:664px">23</div>
<div style="left:66px;top:219px;width:145px;height:19px;background:#ffff00"></div>
<div class="t num" style="left:66px;top:222.5px;font-size:14px">Сумма выручки, руб.</div>
<div class="t num" style="left:66px;top:243px;font-size:13px">10526</div>
<div style="left:66px;top:258px;width:145px;height:1px;background:#000"></div>
<div class="t num" style="left:66px;top:263px;font-size:13px">17456</div>
<div style="left:66px;top:278px;width:145px;height:1px;background:#000"></div>
<div class="t num" style="left:66px;top:283px;font-size:13px">21563</div>
<div style="left:66px;top:298px;width:145px;height:1px;background:#000"></div>
<div class="t num" style="left:66px;top:303px;font-size:13px">8556</div>
<div style="left:66px;top:318px;width:145px;height:1px;background:#000"></div>
<div class="t num" style="left:66px;top:323px;font-size:13px">11896</div>
<div style="left:66px;top:338px;width:145px;height:1px;background:#000"></div>
<div class="t num" style="left:66px;top:343px;font-size:13px">21546</div>
<div style="left:66px;top:358px;width:145px;height:1px;background:#000"></div>
<div class="t num" style="left:66px;top:363px;font-size:13px">10526</div>
<div style="left:66px;top:378px;width:145px;height:1px;background:#000"></div>
<div class="t num" style="left:66px;top:383px;font-size:13px">7855</div>
<div style="left:66px;top:398px;width:145px;height:1px;background:#000"></div>
<div class="t num" style="left:66px;top:403px;font-size:13px">15456</div>
<div style="left:66px;top:418px;width:145px;height:1px;background:#000"></div>
<div class="t num" style="left:66px;top:423px;font-size:13px">11496</div>
<div style="left:66px;top:438px;width:145px;height:1px;background:#000"></div>
<div class="t num" style="left:66px;top:443px;font-size:13px">9568</div>
<div style="left:66px;top:458px;width:145px;height:1px;background:#000"></div>
<div class="t num" style="left:66px;top:463px;font-size:13px">1234</div>
<div style="left:66px;top:478px;width:145px;height:1px;background:#000"></div>
<div class="t num" style="left:66px;top:483px;font-size:13px">14589</div>
<div style="left:66px;top:498px;width:145px;height:1px;background:#000"></div>
<div class="t num" style="left:66px;top:503px;font-size:13px">10456</div>
<div style="left:66px;top:518px;width:145px;height:1px;background:#000"></div>
<div class="t num" style="left:66px;top:523px;font-size:13px">15461</div>
<div style="left:66px;top:538px;width:145px;height:1px;background:#000"></div>
<div class="t num" style="left:66px;top:543px;font-size:13px">3256</div>
<div style="left:66px;top:558px;width:145px;height:1px;background:#000"></div>
<div class="t num" style="left:66px;top:563px;font-size:13px">2458</div>
<div style="left:66px;top:578px;width:145px;height:1px;background:#000"></div>
<div class="t num" style="left:66px;top:583px;font-size:13px">10256</div>
<div style="left:66px;top:598px;width:145px;height:1px;background:#000"></div>
<div class="t num" style="left:66px;top:603px;font-size:13px">5469</div>
<div style="left:66px;top:618px;width:145px;height:1px;background:#000"></div>
<div class="t num" style="left:66px;top:623px;font-size:13px">2457</div>
<div style="left:66px;top:638px;width:145px;height:1px;background:#000"></div>
<div class="t num" style="left:66px;top:643px;font-size:13px">12546</div>
<div style="left:66px;top:658px;width:145px;height:1px;background:#000"></div>
<div class="t num" style="left:66px;top:663px;font-size:13px">11756</div>
<div style="left:66px;top:238px;width:145px;height:1px;background:#0000ff"></div>
<div style="left:211px;top:219px;width:1px;height:19px;background:#008000"></div>
<div style="left:208px;top:219px;width:5px;height:3px;background:#008000"></div>
<div style="left:208px;top:235px;width:5px;height:3px;background:#008000"></div>
<div style="left:211px;top:238px;width:1px;height:428px;background:#0000ff"></div>
<div style="left:208px;top:237px;width:5px;height:5px;background:#0000ff"></div>
<div style="left:796px;top:198px;width:16px;height:468px;background:#dde1e6;border-left:1px solid #c9ced5"></div>
<div style="left:796px;top:198px;width:16px;height:1px;background:#8e959e"></div>
<div style="left:797px;top:199px;width:14px;height:8px;background:#fff;border:1px solid #8a9099"></div>
<div style="left:800px;top:202px;width:8px;height:1px;background:#9aa0aa"></div>
<svg style="left:799px;top:213px" width="9" height="5" viewBox="0 0 9 5"><path d="M0 5 H9 L4.5 0Z" fill="#4a4a4a"/></svg>
<div style="left:797px;top:224px;width:14px;height:322px;border:1px solid #9aa1aa;border-radius:2px;background:linear-gradient(90deg,#f2f4f7,#e6e9ee 50%,#dde1e7)"></div>
<svg style="left:800px;top:381px" width="8" height="8" viewBox="0 0 8 8"><path d="M0 0.5H8M0 2.5H8M0 4.5H8M0 6.5H8" stroke="#777" stroke-width="1"/></svg>
<svg style="left:799px;top:655px" width="9" height="5" viewBox="0 0 9 5"><path d="M0 0 H9 L4.5 5Z" fill="#4a4a4a"/></svg>
<div style="left:796px;top:665px;width:16px;height:1px;background:#c4c9d0"></div>
<div style="left:40px;top:666px;width:772px;height:16px;background:#dde1e6"></div>
<div style="left:40px;top:666px;width:772px;height:1px;background:#9aa1aa"></div>
<div style="left:40px;top:681px;width:772px;height:1px;background:#9aa1aa"></div>
<svg style="left:46px;top:670px" width="52" height="8" viewBox="0 0 52 8"><rect x="0" y="0" width="1.5" height="8" fill="#4a4a4a"/><path d="M6 0 V8 L1.5 4Z" fill="#4a4a4a"/><path d="M20.5 0 V8 L15.5 4Z" fill="#4a4a4a"/><path d="M30 0 V8 L34.5 4Z" fill="#4a4a4a"/><path d="M44 0 V8 L48.5 4Z" fill="#4a4a4a"/><rect x="48.5" y="0" width="1.5" height="8" fill="#4a4a4a"/></svg>
<div style="left:102px;top:666px;width:1px;height:15px;background:#9aa1aa"></div>
<svg style="left:100px;top:666px" width="210" height="17" viewBox="0 0 210 17">
<path d="M53.5 15.5 L62.5 0.5 L116.5 0.5 L107.5 15.5 Z" fill="#e6e9ed" stroke="#9aa1aa"/>
<path d="M107.5 15.5 L116.5 0.5 L170.5 0.5 L161.5 15.5 Z" fill="#e6e9ed" stroke="#9aa1aa"/>
<path d="M161.5 15.5 L170.5 0.5 L204.5 0.5 L191.5 15.5 Z" fill="#eceef2" stroke="#9aa1aa"/>
<path d="M2.5 -1 L2.5 15.5 L55 15.5 L64 0.5" fill="#fff" stroke="#9aa1aa"/>
</svg>
<div class="t" style="left:112px;top:669.5px;font-size:12px;color:#2a2a2a"><b>Лист1</b></div>
<div class="t" style="left:166px;top:669.5px;font-size:12px;color:#3a3a3a">Лист2</div>
<div class="t" style="left:219px;top:669.5px;font-size:12px;color:#3a3a3a">Лист3</div>
<svg style="left:272px;top:668px" width="16" height="13" viewBox="0 0 16 13"><rect x="4.5" y="3.5" width="10" height="8" rx="1.5" fill="#d5e0f0" stroke="#4d6a96"/><circle cx="4" cy="4" r="2.6" fill="#f7c94a" stroke="#e08a10" stroke-width="0.8"/></svg>
<div style="left:494px;top:667px;width:8px;height:14px;background:#fff;border:1px solid #8a9099"></div>
<div style="left:497px;top:670px;width:1px;height:8px;background:#777"></div>
<svg style="left:507px;top:670px" width="6" height="9" viewBox="0 0 6 9"><path d="M6 0 V9 L0 4.5Z" fill="#4a4a4a"/></svg>
<div style="left:561px;top:667px;width:210px;height:14px;border:1px solid #9aa1aa;border-radius:2px;background:linear-gradient(#f2f4f7,#e6e9ee 50%,#dde1e7)"></div>
<svg style="left:662px;top:670px" width="9" height="8" viewBox="0 0 9 8"><path d="M0.5 0V8M2.5 0V8M4.5 0V8M6.5 0V8" stroke="#777" stroke-width="1"/></svg>
<svg style="left:777px;top:670px" width="6" height="9" viewBox="0 0 6 9"><path d="M0 0 V9 L6 4.5Z" fill="#4a4a4a"/></svg>
<div style="left:788px;top:667px;width:8px;height:14px;background:#fff;border:1px solid #8a9099"></div>
<div style="left:791px;top:670px;width:1px;height:8px;background:#777"></div>
<div style="left:40px;top:682px;width:772px;height:22px;background:linear-gradient(#eef0f3,#e2e5e9 50%,#d3d7dc);border-top:1px solid #8e959e;border-bottom:1px solid #8e959e"></div>
<div style="left:94px;top:684px;width:1px;height:19px;background:#b0b6be"></div>
<div style="left:129px;top:684px;width:1px;height:19px;background:#b0b6be"></div>
<div style="left:555px;top:684px;width:1px;height:19px;background:#b0b6be"></div>
<div class="t" style="left:48px;top:687.5px;font-size:12px;color:#2e2e2e">Готово</div>
<svg style="left:104px;top:686px" width="15" height="13" viewBox="0 0 15 13"><rect x="1.5" y="1.5" width="13" height="11" fill="#fff" stroke="#3a63a8"/><rect x="2" y="2" width="12" height="2" fill="#4f7fd0"/><path d="M4 6.5H13M4 8.5H13M4 10.5H13" stroke="#7a9bd0" stroke-width="1"/><circle cx="4" cy="3.5" r="3" fill="#e85a2a"/></svg>
<div class="t" style="left:237px;top:688.5px;font-size:11px;color:#2e2e2e">Среднее: 26639,51786</div>
<div class="t" style="left:367px;top:688px;font-size:11.5px;color:#2e2e2e">Количество: 86</div>
<div class="t" style="left:463px;top:688.5px;font-size:11px;color:#2e2e2e">Сумма: 1491813</div>
<div style="left:560px;top:684px;width:19px;height:19px;background:linear-gradient(#fef1b0,#fddc72);border:1px solid #d9a93a;border-radius:3px"></div>
<svg style="left:563px;top:688px" width="14" height="10" viewBox="0 0 14 10"><rect x="0.5" y="0.5" width="13" height="9" fill="#fff" stroke="#555"/><path d="M0 3.5H14M0 6.5H14M4.5 0V10M9.5 0V10" stroke="#555"/></svg>
<svg style="left:581px;top:687px" width="14" height="12" viewBox="0 0 14 12"><rect x="0.5" y="0.5" width="13" height="11" fill="#aeb3ba" stroke="#555"/><rect x="3.5" y="2.5" width="7" height="7" fill="#fff" stroke="#777"/><path d="M5 4.5H9M5 6.5H9" stroke="#999"/></svg>
<svg style="left:600px;top:687px" width="14" height="12" viewBox="0 0 14 12"><rect x="0.5" y="0.5" width="13" height="11" fill="#aeb3ba" stroke="#555"/><rect x="1.5" y="1.5" width="3" height="6" fill="#fff"/><rect x="5.5" y="1.5" width="3" height="6" fill="#fff"/></svg>
<div class="t" style="left:626px;top:688.5px;font-size:11px;color:#2e2e2e">100%</div>
<svg style="left:660px;top:684px" width="135" height="18" viewBox="0 0 135 18"><line x1="17" y1="8.5" x2="117" y2="8.5" stroke="#9aa0a8"/><line x1="17" y1="9.5" x2="117" y2="9.5" stroke="#fff"/><circle cx="9" cy="9" r="7.5" fill="#f4f5f7" stroke="#7d848c"/><rect x="4.5" y="8" width="9" height="2.2" fill="#3e3e3e"/><circle cx="125" cy="9" r="7.5" fill="#f4f5f7" stroke="#7d848c"/><rect x="120.5" y="8" width="9" height="2.2" fill="#3e3e3e"/><rect x="123.9" y="4.5" width="2.2" height="9" fill="#3e3e3e"/><path d="M63.5 2.5 H71.5 V10 L67.5 14 L63.5 10Z" fill="#fbfbfc" stroke="#7d848c"/></svg>
<svg style="left:800px;top:692px" width="12" height="12" viewBox="0 0 12 12"><g fill="#9aa0a8"><rect x="9" y="1" width="2" height="2"/><rect x="6" y="4" width="2" height="2"/><rect x="9" y="4" width="2" height="2"/><rect x="3" y="7" width="2" height="2"/><rect x="6" y="7" width="2" height="2"/><rect x="9" y="7" width="2" height="2"/></g></svg>
<div style="left:39px;top:83px;width:1px;height:622px;background:#8d98a6"></div>
<div style="left:812px;top:83px;width:1px;height:622px;background:#8d98a6"></div>
<div style="left:34px;top:83px;width:5px;height:154px;background:linear-gradient(#cfe0f2,#dbe8f5 60%,#e8f0f9)"></div>
<div style="left:813px;top:83px;width:5px;height:154px;background:linear-gradient(#cfe0f2,#dbe8f5 60%,#e8f0f9)"></div>
<div style="left:266px;top:263px;width:493px;height:301px;border:1px solid #b9b9b9;border-radius:6px;background:rgba(226,226,226,0.72)"></div>
<div style="left:273px;top:269px;width:481px;height:289px;background:#fff;border:1px solid #8e8e8e;overflow:hidden"><div style="left:-1px;top:-1px;width:481px;height:289px;border-radius:10px;box-shadow:0 0 0 12px #ececec;border:1px solid #cfcfcf"></div></div>
<div style="left:269px;top:265px;width:1px;height:1px;background:#7a7a7a"></div>
<div style="left:273px;top:265px;width:1px;height:1px;background:#7a7a7a"></div>
<div style="left:269px;top:269px;width:1px;height:1px;background:#7a7a7a"></div>
<div style="left:755px;top:265px;width:1px;height:1px;background:#7a7a7a"></div>
<div style="left:751px;top:265px;width:1px;height:1px;background:#7a7a7a"></div>
<div style="left:755px;top:269px;width:1px;height:1px;background:#7a7a7a"></div>
<div style="left:269px;top:560px;width:1px;height:1px;background:#7a7a7a"></div>
<div style="left:273px;top:560px;width:1px;height:1px;background:#7a7a7a"></div>
<div style="left:269px;top:556px;width:1px;height:1px;background:#7a7a7a"></div>
<div style="left:755px;top:560px;width:1px;height:1px;background:#7a7a7a"></div>
<div style="left:751px;top:560px;width:1px;height:1px;background:#7a7a7a"></div>
<div style="left:755px;top:556px;width:1px;height:1px;background:#7a7a7a"></div>
<div style="left:510px;top:265px;width:1px;height:1px;background:#7a7a7a"></div>
<div style="left:510px;top:560px;width:1px;height:1px;background:#7a7a7a"></div>
<div style="left:269px;top:408px;width:1px;height:1px;background:#7a7a7a"></div>
<div style="left:755px;top:408px;width:1px;height:1px;background:#7a7a7a"></div>
<div style="left:513px;top:265px;width:1px;height:1px;background:#7a7a7a"></div>
<div style="left:513px;top:560px;width:1px;height:1px;background:#7a7a7a"></div>
<div style="left:269px;top:411px;width:1px;height:1px;background:#7a7a7a"></div>
<div style="left:755px;top:411px;width:1px;height:1px;background:#7a7a7a"></div>
<div style="left:516px;top:265px;width:1px;height:1px;background:#7a7a7a"></div>
<div style="left:516px;top:560px;width:1px;height:1px;background:#7a7a7a"></div>
<div style="left:269px;top:414px;width:1px;height:1px;background:#7a7a7a"></div>
<div style="left:755px;top:414px;width:1px;height:1px;background:#7a7a7a"></div>
<div style="left:519px;top:265px;width:1px;height:1px;background:#7a7a7a"></div>
<div style="left:519px;top:560px;width:1px;height:1px;background:#7a7a7a"></div>
<div style="left:269px;top:417px;width:1px;height:1px;background:#7a7a7a"></div>
<div style="left:755px;top:417px;width:1px;height:1px;background:#7a7a7a"></div>
<svg style="left:0;top:0" width="852" height="744" viewBox="0 0 852 744" shape-rendering="crispEdges">
<rect x="350" y="283" width="240" height="1" fill="#868686"/>
<rect x="350" y="311" width="240" height="1" fill="#868686"/>
<rect x="350" y="339" width="240" height="1" fill="#868686"/>
<rect x="350" y="367" width="240" height="1" fill="#868686"/>
<rect x="350" y="395" width="240" height="1" fill="#868686"/>
<rect x="350" y="423" width="240" height="1" fill="#868686"/>
<rect x="350" y="451" width="240" height="1" fill="#868686"/>
<rect x="350" y="479" width="240" height="1" fill="#868686"/>
<rect x="354" y="283" width="1" height="197" fill="#868686"/>
<rect x="354" y="479" width="1" height="5" fill="#868686"/>
<rect x="362" y="479" width="1" height="5" fill="#868686"/>
<rect x="371" y="479" width="1" height="5" fill="#868686"/>
<rect x="379" y="479" width="1" height="5" fill="#868686"/>
<rect x="388" y="479" width="1" height="5" fill="#868686"/>
<rect x="396" y="479" width="1" height="5" fill="#868686"/>
<rect x="404" y="479" width="1" height="5" fill="#868686"/>
<rect x="413" y="479" width="1" height="5" fill="#868686"/>
<rect x="421" y="479" width="1" height="5" fill="#868686"/>
<rect x="430" y="479" width="1" height="5" fill="#868686"/>
<rect x="438" y="479" width="1" height="5" fill="#868686"/>
<rect x="446" y="479" width="1" height="5" fill="#868686"/>
<rect x="455" y="479" width="1" height="5" fill="#868686"/>
<rect x="463" y="479" width="1" height="5" fill="#868686"/>
<rect x="472" y="479" width="1" height="5" fill="#868686"/>
<rect x="480" y="479" width="1" height="5" fill="#868686"/>
<rect x="488" y="479" width="1" height="5" fill="#868686"/>
<rect x="497" y="479" width="1" height="5" fill="#868686"/>
<rect x="505" y="479" width="1" height="5" fill="#868686"/>
<rect x="514" y="479" width="1" height="5" fill="#868686"/>
<rect x="522" y="479" width="1" height="5" fill="#868686"/>
<rect x="530" y="479" width="1" height="5" fill="#868686"/>
<rect x="539" y="479" width="1" height="5" fill="#868686"/>
<rect x="547" y="479" width="1" height="5" fill="#868686"/>
<rect x="556" y="479" width="1" height="5" fill="#868686"/>
<rect x="564" y="479" width="1" height="5" fill="#868686"/>
<rect x="572" y="479" width="1" height="5" fill="#868686"/>
<rect x="581" y="479" width="1" height="5" fill="#868686"/>
<rect x="589" y="479" width="1" height="5" fill="#868686"/>
</svg>
<svg style="left:0;top:0" width="852" height="744" viewBox="0 0 852 744" shape-rendering="crispEdges">
<rect x="357" y="361" width="4" height="118" fill="#4f81bd"/>
<rect x="357" y="331" width="4" height="30" fill="#c0504d"/>
<rect x="366" y="361" width="3" height="118" fill="#4f81bd"/>
<rect x="366" y="312" width="3" height="49" fill="#c0504d"/>
<rect x="374" y="361" width="3" height="118" fill="#4f81bd"/>
<rect x="374" y="300" width="3" height="61" fill="#c0504d"/>
<rect x="382" y="361" width="4" height="118" fill="#4f81bd"/>
<rect x="382" y="337" width="4" height="24" fill="#c0504d"/>
<rect x="391" y="361" width="3" height="118" fill="#4f81bd"/>
<rect x="391" y="327" width="3" height="34" fill="#c0504d"/>
<rect x="399" y="361" width="4" height="118" fill="#4f81bd"/>
<rect x="399" y="300" width="4" height="61" fill="#c0504d"/>
<rect x="408" y="361" width="3" height="118" fill="#4f81bd"/>
<rect x="408" y="331" width="3" height="30" fill="#c0504d"/>
<rect x="416" y="361" width="3" height="118" fill="#4f81bd"/>
<rect x="416" y="339" width="3" height="22" fill="#c0504d"/>
<rect x="424" y="361" width="4" height="118" fill="#4f81bd"/>
<rect x="424" y="317" width="4" height="44" fill="#c0504d"/>
<rect x="433" y="361" width="3" height="118" fill="#4f81bd"/>
<rect x="433" y="328" width="3" height="33" fill="#c0504d"/>
<rect x="441" y="361" width="3" height="118" fill="#4f81bd"/>
<rect x="441" y="334" width="3" height="27" fill="#c0504d"/>
<rect x="449" y="361" width="4" height="118" fill="#4f81bd"/>
<rect x="449" y="357" width="4" height="4" fill="#c0504d"/>
<rect x="458" y="361" width="3" height="118" fill="#4f81bd"/>
<rect x="458" y="320" width="3" height="41" fill="#c0504d"/>
<rect x="466" y="361" width="4" height="118" fill="#4f81bd"/>
<rect x="466" y="331" width="4" height="30" fill="#c0504d"/>
<rect x="475" y="361" width="3" height="118" fill="#4f81bd"/>
<rect x="475" y="317" width="3" height="44" fill="#c0504d"/>
<rect x="483" y="361" width="3" height="118" fill="#4f81bd"/>
<rect x="483" y="351" width="3" height="10" fill="#c0504d"/>
<rect x="491" y="361" width="4" height="118" fill="#4f81bd"/>
<rect x="491" y="354" width="4" height="7" fill="#c0504d"/>
<rect x="500" y="361" width="3" height="118" fill="#4f81bd"/>
<rect x="500" y="332" width="3" height="29" fill="#c0504d"/>
<rect x="508" y="361" width="3" height="118" fill="#4f81bd"/>
<rect x="508" y="345" width="3" height="16" fill="#c0504d"/>
<rect x="516" y="361" width="4" height="118" fill="#4f81bd"/>
<rect x="516" y="354" width="4" height="7" fill="#c0504d"/>
<rect x="525" y="361" width="3" height="118" fill="#4f81bd"/>
<rect x="525" y="326" width="3" height="35" fill="#c0504d"/>
<rect x="533" y="361" width="4" height="118" fill="#4f81bd"/>
<rect x="533" y="328" width="4" height="33" fill="#c0504d"/>
<rect x="542" y="361" width="3" height="118" fill="#4f81bd"/>
<rect x="542" y="323" width="3" height="38" fill="#c0504d"/>
<rect x="550" y="361" width="3" height="118" fill="#4f81bd"/>
<rect x="550" y="348" width="3" height="13" fill="#c0504d"/>
<rect x="558" y="361" width="4" height="118" fill="#4f81bd"/>
<rect x="558" y="345" width="4" height="16" fill="#c0504d"/>
<rect x="567" y="361" width="3" height="118" fill="#4f81bd"/>
<rect x="567" y="321" width="3" height="40" fill="#c0504d"/>
<rect x="575" y="361" width="3" height="118" fill="#4f81bd"/>
<rect x="575" y="322" width="3" height="39" fill="#c0504d"/>
<rect x="583" y="361" width="4" height="118" fill="#4f81bd"/>
<rect x="583" y="322" width="4" height="39" fill="#c0504d"/>
</svg>
<div class="t" style="left:244px;top:278.5px;width:100px;text-align:right;font-size:12.5px;color:#000">25.08.2091</div>
<div class="t" style="left:244px;top:306.5px;width:100px;text-align:right;font-size:12.5px;color:#000">08.04.2064</div>
<div class="t" style="left:244px;top:334.5px;width:100px;text-align:right;font-size:12.5px;color:#000">21.11.2036</div>
<div class="t" style="left:244px;top:362.5px;width:100px;text-align:right;font-size:12.5px;color:#000">06.07.2009</div>
<div class="t" style="left:244px;top:390.5px;width:100px;text-align:right;font-size:12.5px;color:#000">18.02.1982</div>
<div class="t" style="left:244px;top:418.5px;width:100px;text-align:right;font-size:12.5px;color:#000">03.10.1954</div>
<div class="t" style="left:244px;top:446.5px;width:100px;text-align:right;font-size:12.5px;color:#000">18.05.1927</div>
<div class="t" style="left:244px;top:474.5px;width:100px;text-align:right;font-size:12.5px;color:#000">00.01.1900</div>
<div class="t" style="left:310.6px;top:488px;width:100px;height:12px;transform-origin:50px 6px;transform:rotate(-90deg) translateX(-44px);text-align:right;font-size:12px;color:#000"><span style="position:static">Картофель</span></div>
<div class="t" style="left:327.4px;top:488px;width:100px;height:12px;transform-origin:50px 6px;transform:rotate(-90deg) translateX(-44px);text-align:right;font-size:12px;color:#000"><span style="position:static">Мясо</span></div>
<div class="t" style="left:344.2px;top:488px;width:100px;height:12px;transform-origin:50px 6px;transform:rotate(-90deg) translateX(-44px);text-align:right;font-size:12px;color:#000"><span style="position:static">Картофель</span></div>
<div class="t" style="left:361.0px;top:488px;width:100px;height:12px;transform-origin:50px 6px;transform:rotate(-90deg) translateX(-44px);text-align:right;font-size:12px;color:#000"><span style="position:static">Мясо</span></div>
<div class="t" style="left:377.8px;top:488px;width:100px;height:12px;transform-origin:50px 6px;transform:rotate(-90deg) translateX(-44px);text-align:right;font-size:12px;color:#000"><span style="position:static">Картофель</span></div>
<div class="t" style="left:394.6px;top:488px;width:100px;height:12px;transform-origin:50px 6px;transform:rotate(-90deg) translateX(-44px);text-align:right;font-size:12px;color:#000"><span style="position:static">Мясо</span></div>
<div class="t" style="left:411.4px;top:488px;width:100px;height:12px;transform-origin:50px 6px;transform:rotate(-90deg) translateX(-44px);text-align:right;font-size:12px;color:#000"><span style="position:static">Картофель</span></div>
<div class="t" style="left:428.2px;top:488px;width:100px;height:12px;transform-origin:50px 6px;transform:rotate(-90deg) translateX(-44px);text-align:right;font-size:12px;color:#000"><span style="position:static">Мясо</span></div>
<div class="t" style="left:445.0px;top:488px;width:100px;height:12px;transform-origin:50px 6px;transform:rotate(-90deg) translateX(-44px);text-align:right;font-size:12px;color:#000"><span style="position:static">Чай</span></div>
<div class="t" style="left:461.8px;top:488px;width:100px;height:12px;transform-origin:50px 6px;transform:rotate(-90deg) translateX(-44px);text-align:right;font-size:12px;color:#000"><span style="position:static">Сахар</span></div>
<div class="t" style="left:478.6px;top:488px;width:100px;height:12px;transform-origin:50px 6px;transform:rotate(-90deg) translateX(-44px);text-align:right;font-size:12px;color:#000"><span style="position:static">Картофель</span></div>
<div class="t" style="left:495.4px;top:488px;width:100px;height:12px;transform-origin:50px 6px;transform:rotate(-90deg) translateX(-44px);text-align:right;font-size:12px;color:#000"><span style="position:static">Мясо</span></div>
<div class="t" style="left:512.2px;top:488px;width:100px;height:12px;transform-origin:50px 6px;transform:rotate(-90deg) translateX(-44px);text-align:right;font-size:12px;color:#000"><span style="position:static">Чай</span></div>
<div class="t" style="left:529.0px;top:488px;width:100px;height:12px;transform-origin:50px 6px;transform:rotate(-90deg) translateX(-44px);text-align:right;font-size:12px;color:#000"><span style="position:static">Рыба</span></div>
<div style="left:611px;top:397px;width:7px;height:8px;background:#c0504d"></div>
<div style="left:611px;top:421px;width:7px;height:7px;background:#4f81bd"></div>
<div class="t" style="left:621px;top:396.5px;font-size:12.2px">Сумма выручки, руб.</div>
<div class="t" style="left:621px;top:419.5px;font-size:12.2px">Дата</div>
<div style="left:518px;top:29px;width:188px;height:58px;border:5px solid #ff0000;border-radius:13px;box-shadow:1px 4px 6px rgba(0,0,0,.55)"></div>
</body></html>
